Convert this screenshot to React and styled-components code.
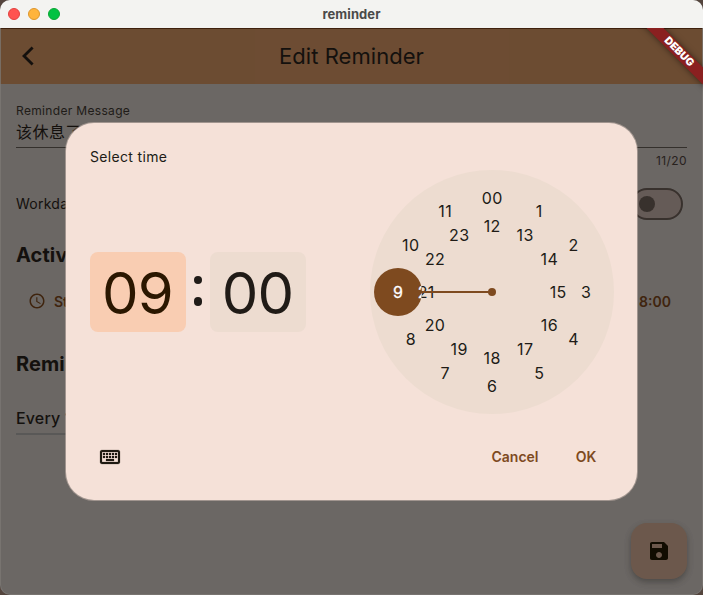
import React from "react";
import styled, { createGlobalStyle, css } from "styled-components";

const Global = createGlobalStyle`
  * { box-sizing: border-box; }
  html, body { margin: 0; padding: 0; background: #54453d; overflow: hidden; }
  body, button { font-family: Inter, "Noto Sans CJK SC", sans-serif; }
`;

const Window = styled.div`
  position: relative;
  display: flex;
  flex-direction: column;
  width: 703px;
  height: 595px;
  border-radius: 10px;
  overflow: hidden;
  background: #6b6764;
  color: #14110e;
  white-space: nowrap;
`;

const Edge = styled.div`
  position: absolute;
  inset: 28px 0 0;
  border: 1px solid #7c7875;
  border-top: 0;
  border-radius: 0 0 10px 10px;
  opacity: 0.75;
  pointer-events: none;
`;

const TitleBar = styled.header`
  display: grid;
  grid-template-columns: 1fr auto 1fr;
  align-items: center;
  height: 28px;
  padding: 0 8px;
  background: #f3f3f1;
`;

const Lights = styled.div`
  display: flex;
  gap: 8px;
`;

const Light = styled.span`
  width: 12px;
  height: 12px;
  border-radius: 50%;
  background: ${(p) => p.$fill};
  border: 1px solid ${(p) => p.$rim};
`;

const WindowTitle = styled.span`
  font-size: 13px;
  font-weight: 700;
  line-height: 27px;
  letter-spacing: 0.1px;
  color: #4a4a49;
`;

const AppBar = styled.div`
  display: grid;
  grid-template-columns: 56px 1fr 56px;
  align-items: center;
  height: 56px;
  background: #6d4c33;
  border-top: 1px solid #3f210e;
`;

const BackButton = styled.button`
  display: grid;
  place-items: center;
  height: 24px;
  margin-top: -1px;
  padding: 0;
  border: 0;
  background: none;
`;

const AppTitle = styled.h1`
  margin: -2px 0 0;
  text-align: center;
  font-size: 22px;
  font-weight: 400;
  line-height: 28px;
  letter-spacing: 0.05px;
`;

const BannerClip = styled.div`
  position: absolute;
  top: 28px;
  right: 0;
  width: 70px;
  height: 70px;
  overflow: hidden;
`;

const Banner = styled.span`
  position: absolute;
  top: 17.5px;
  left: -19.5px;
  width: 130px;
  height: 12px;
  transform: rotate(45deg);
  background: #8a2020;
  box-shadow: 0 0 6px rgba(0, 0, 0, 0.5);
  color: #fff;
  text-align: center;
  font-size: 10.6px;
  font-weight: 900;
  line-height: 12px;
`;

const Content = styled.main`
  display: flex;
  flex-direction: column;
  padding: 18px 16px 0;
`;

const FieldLabel = styled.label`
  font-size: 12px;
  line-height: 18px;
  letter-spacing: 0.33px;
  color: #211c18;
`;

const FieldValue = styled.div`
  height: 28px;
  border-bottom: 1px solid #35302c;
  font-size: 16px;
  line-height: 24px;
  letter-spacing: 0.5px;
`;

const Counter = styled.div`
  align-self: flex-end;
  height: 24px;
  font-size: 12px;
  line-height: 25px;
  letter-spacing: 0.4px;
  color: #28221e;
`;

const SettingRow = styled.div`
  display: flex;
  align-items: center;
  justify-content: space-between;
  height: 32px;
  margin-top: 16px;
  padding-right: 4px;
  font-size: 14px;
  letter-spacing: 0.25px;
`;

const SettingLabel = styled.span`
  padding-bottom: 2px;
`;

const Switch = styled.span`
  display: flex;
  align-items: center;
  width: 52px;
  height: 32px;
  padding-left: 6px;
  border: 2px solid #39322e;
  border-radius: 16px;
  background: #665b57;

  &::before {
    content: "";
    width: 16px;
    height: 16px;
    border-radius: 50%;
    background: #39322e;
  }
`;

const Heading = styled.h2`
  margin: ${(p) => p.$top}px 0 0;
  font-size: 20px;
  font-weight: 700;
  line-height: 28px;
  letter-spacing: 0.1px;
`;

const Times = styled.div`
  display: flex;
  justify-content: space-between;
  height: 40px;
  margin-top: 12px;
  padding: 0 16px 0 12px;
`;

const TimeButton = styled.button`
  display: flex;
  align-items: center;
  gap: 8px;
  padding: 0;
  border: 0;
  background: none;
  color: #3f240e;
  font-size: 14px;
  font-weight: 600;
`;

const EndTime = styled(TimeButton)`
  gap: 2px;
`;

const Frequency = styled.div`
  width: 160px;
  height: 33px;
  margin-top: 24px;
  border-bottom: 2px solid #595857;
  font-size: 16px;
  font-weight: 500;
  line-height: 32px;
  letter-spacing: 0.15px;
`;

const SaveButton = styled.button`
  position: absolute;
  right: 16px;
  bottom: 16px;
  display: grid;
  place-items: center;
  width: 56px;
  height: 56px;
  padding: 0;
  border: 0;
  border-radius: 16px;
  background: #6d594c;
  color: #120c02;
  box-shadow: 0 3px 6px rgba(0, 0, 0, 0.28);
`;

const Dialog = styled.section`
  position: absolute;
  top: 123px;
  left: 66px;
  display: flex;
  flex-direction: column;
  width: 571px;
  height: 377px;
  padding: 24px 16px 24px 24px;
  border-radius: 28px;
  background: #f5e1d8;
  box-shadow: 0 0 0 1px rgba(205, 187, 179, 0.55);
  color: #201b16;
`;

const DialogTitle = styled.div`
  height: 20px;
  font-size: 14px;
  line-height: 20px;
  letter-spacing: 0.33px;
`;

const PickerBody = styled.div`
  display: flex;
  align-items: center;
  justify-content: space-between;
  height: 250px;
  padding-right: 7px;
`;

const TimeFields = styled.div`
  display: flex;
`;

const TimeBox = styled.div`
  width: 96px;
  height: 80px;
  padding-right: 1px;
  border-radius: 8px;
  background: #eddcd0;
  text-align: center;
  font-size: 58px;
  font-weight: 430;
  line-height: 82px;
  letter-spacing: -0.8px;
  ${(p) =>
    p.$active &&
    css`
      background: #f9cdb2;
      color: #2b1700;
    `}
`;

const Colon = styled.div`
  display: flex;
  flex-direction: column;
  align-items: center;
  gap: 13px;
  width: 24px;
  padding-top: 24px;

  &::before,
  &::after {
    content: "";
    width: 8.5px;
    height: 8.5px;
    border-radius: 50%;
    background: #201b18;
  }
`;

const Dial = styled.svg`
  display: block;
  width: 244px;
  height: 244px;

  text {
    font-family: Inter, sans-serif;
    font-size: 16px;
    font-weight: 430;
    letter-spacing: 0.4px;
    text-anchor: middle;
  }
`;

const DialogActions = styled.footer`
  display: flex;
  align-items: center;
  height: 40px;
  margin-top: 20px;
`;

const ModeButton = styled.button`
  display: grid;
  place-items: center;
  width: 40px;
  height: 40px;
  margin-right: auto;
  padding: 1px 0 0;
  border: 0;
  background: none;
  color: #201b12;

  path {
    stroke: currentColor;
    stroke-width: 0.2px;
  }
`;

const ActionButton = styled.button`
  height: 40px;
  width: ${(p) => p.$width}px;
  padding: 0;
  border: 0;
  background: none;
  color: #7e4a1f;
  font-size: 14px;
  font-weight: 600;
`;

const numbers = Array.from({ length: 12 }, (_, i) => {
  const a = (i * Math.PI) / 6;
  const at = (r) => ({ x: 122.2 + r * Math.sin(a), y: 122 - r * Math.cos(a) });
  return [
    { label: i === 0 ? "00" : String(i), ...at(94) },
    { label: String(i + 12), ...at(66) },
  ];
}).flat();

function DialNumbers() {
  return numbers.map((n) => (
    <text key={n.label} x={n.x} y={n.y + 6}>
      {n.label}
    </text>
  ));
}

function ClockDial() {
  return (
    <Dial viewBox="0 0 244 244">
      <defs>
        <clipPath id="hand">
          <circle cx="28" cy="122" r="24" />
        </clipPath>
      </defs>
      <circle cx="122" cy="122" r="122" fill="#eddcd0" />
      <g fill="#201b16">
        <DialNumbers />
      </g>
      <circle cx="28" cy="122" r="24" fill="#7e4a1f" />
      <circle cx="122" cy="122" r="4" fill="#7e4a1f" />
      <path d="M28 122H122" stroke="#7e4a1f" strokeWidth="2" />
      <g fill="#fff" stroke="#fff" strokeWidth="0.3" clipPath="url(#hand)">
        <DialNumbers />
      </g>
    </Dial>
  );
}

function Icon({ d, size = 24 }) {
  return (
    <svg width={size} height={size} viewBox="0 0 24 24" fill="currentColor">
      <path d={d} />
    </svg>
  );
}

const KEYBOARD =
  "M20 7v10H4V7h16m0-2H4c-1.1 0-1.99.9-1.99 2L2 17c0 1.1.9 2 2 2h16c1.1 0 2-.9 2-2V7c0-1.1-.9-2-2-2zm-9 3h2v2h-2zm0 3h2v2h-2zM8 8h2v2H8zm0 3h2v2H8zm-3 0h2v2H5zm0-3h2v2H5zm3 6h8v2H8zm6-3h2v2h-2zm0-3h2v2h-2zm3 3h2v2h-2zm0-3h2v2h-2z";
const SAVE =
  "M17 3H5c-1.11 0-2 .9-2 2v14c0 1.1.89 2 2 2h14c1.1 0 2-.9 2-2V7l-4-4zm-5 16c-1.66 0-3-1.34-3-3s1.34-3 3-3 3 1.34 3 3-1.34 3-3 3zm3-10H5V5h10v4z";
const CLOCK =
  "M11.99 2C6.47 2 2 6.48 2 12s4.47 10 9.99 10C17.52 22 22 17.52 22 12S17.52 2 11.99 2zM12 20c-4.42 0-8-3.58-8-8s3.58-8 8-8 8 3.58 8 8-3.58 8-8 8zm.5-13H11v6l5.25 3.15.75-1.23-4.5-2.67z";

export default function App() {
  return (
    <>
      <Global />
      <Window>
        <TitleBar>
          <Lights>
            <Light $fill="#ff5350" $rim="#e2413f" />
            <Light $fill="#ffb43c" $rim="#dd962c" />
            <Light $fill="#00c242" $rim="#0ba634" />
          </Lights>
          <WindowTitle>reminder</WindowTitle>
        </TitleBar>
        <AppBar>
          <BackButton aria-label="Back">
            <svg width="24" height="24" viewBox="0 0 24 24" fill="none">
              <path
                d="M16.6 3.4L8 12L16.6 20.6"
                stroke="#14110e"
                strokeWidth="2.8"
              />
            </svg>
          </BackButton>
          <AppTitle>Edit Reminder</AppTitle>
        </AppBar>
        <Content>
          <FieldLabel>Reminder Message</FieldLabel>
          <FieldValue>该休息了</FieldValue>
          <Counter>11/20</Counter>
          <SettingRow>
            <SettingLabel>Workdays</SettingLabel>
            <Switch />
          </SettingRow>
          <Heading $top={21}>Active</Heading>
          <Times>
            <TimeButton>
              <Icon d={CLOCK} size={18} />
              Start
            </TimeButton>
            <EndTime>
              <span>1</span>
              <span>8:00</span>
            </EndTime>
          </Times>
          <Heading $top={29}>Reminder</Heading>
          <Frequency>Every 1</Frequency>
        </Content>
        <SaveButton aria-label="Save">
          <Icon d={SAVE} />
        </SaveButton>
        <Edge />
        <BannerClip>
          <Banner>DEBUG</Banner>
        </BannerClip>
        <Dialog>
          <DialogTitle>Select time</DialogTitle>
          <PickerBody>
            <TimeFields>
              <TimeBox $active>09</TimeBox>
              <Colon />
              <TimeBox>00</TimeBox>
            </TimeFields>
            <ClockDial />
          </PickerBody>
          <DialogActions>
            <ModeButton aria-label="Keyboard input">
              <Icon d={KEYBOARD} />
            </ModeButton>
            <ActionButton $width={72}>Cancel</ActionButton>
            <ActionButton $width={70}>OK</ActionButton>
          </DialogActions>
        </Dialog>
      </Window>
    </>
  );
}
